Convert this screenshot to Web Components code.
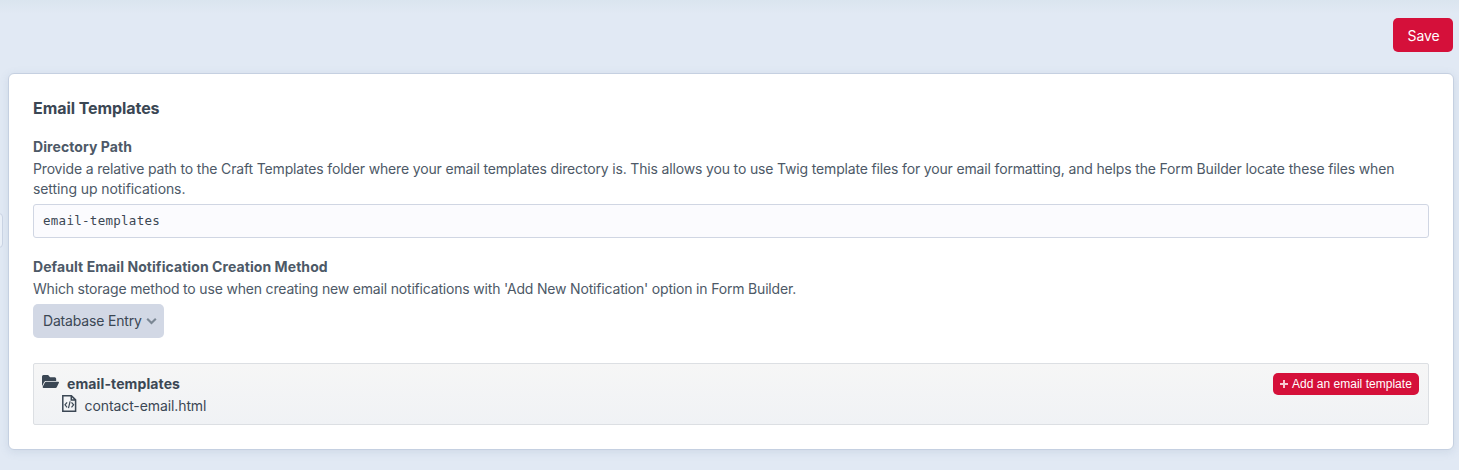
<!DOCTYPE html>
<html lang="en">
<head>
<meta charset="utf-8">
<title>Email Templates</title>
<style>
html,body{margin:0;height:100%;overflow:hidden}
body{font-family:Inter,"Liberation Sans",sans-serif;font-size:14px;line-height:20px;color:#3b4754;background:#e1e9f4}
</style>
</head>
<body>
<settings-page></settings-page>
<script>
const define = (name, html) => customElements.define(name, class extends HTMLElement {
  constructor() {
    super();
    this.attachShadow({mode: 'open'}).innerHTML = html;
  }
});

define('action-button', `<style>
:host{display:flex;align-items:center;justify-content:center;box-sizing:border-box;background:#d5103a;color:#fff;border-radius:5px;width:60px;height:34px;white-space:nowrap;padding:2px 0 0 1px;letter-spacing:-.1px}
:host([small]){width:146px;height:22px;border-radius:5px;font:12px/18px "Liberation Sans",sans-serif;letter-spacing:.02px;justify-content:flex-start;padding:0 0 0 7px;gap:4px}
svg{display:none}
:host([small]) svg{display:block}
</style><svg width="8" height="8" viewBox="0 0 8 8"><path d="M4 0v8M0 4h8" stroke="#f6c9d1" stroke-width="2"/></svg><slot></slot>`);

define('setting-field', `<style>
:host{display:block}
h3{margin:0;font-size:14px;line-height:20px;font-weight:700;color:#4d5967;white-space:nowrap;letter-spacing:.075px}
.help{color:#4d5967;margin:2px 0 5px;line-height:20px;white-space:nowrap;letter-spacing:var(--help-spacing,0)}
</style><h3><slot name="label"></slot></h3><div class="help"><slot name="help"></slot></div><slot></slot>`);

define('path-input', `<style>
:host{display:flex;align-items:center;box-sizing:border-box;height:34px;border:1px solid #d0d6e3;border-radius:3px;background:#fbfbfe;padding:0 9px;font:12.5px/18px "DejaVu Sans Mono",monospace;letter-spacing:.28px;color:#3b4754}
</style><slot></slot>`);

define('select-menu', `<style>
:host{display:flex;align-items:center;box-sizing:border-box;width:131px;height:34px;border-radius:5px;background:#d2d8e5;padding:0 7px 0 10px;justify-content:space-between;white-space:nowrap;letter-spacing:-.17px}
</style><slot></slot><svg width="11" height="8" viewBox="0 0 11 8"><path d="M1.2 1.7l4.3 4.3 4.3-4.3" fill="none" stroke="#7b8794" stroke-width="2.1"/></svg>`);

define('template-tree', `<style>
:host{display:flex;justify-content:space-between;box-sizing:border-box;height:62px;border:1px solid #dcdfe3;border-radius:2px;background:linear-gradient(#f6f6f6,#f0f2f5);padding:9px 9px 0 8px}
.row{display:flex;height:22px;align-items:center;white-space:nowrap}
.folder{font-weight:700;letter-spacing:.11px}
.file{margin-left:20px;letter-spacing:-.1px}
.folder svg{margin:-4px 8px 0 0}
.file svg{margin:-5px 7.6px 0 0}
</style><div>
<div class="row folder"><svg width="17" height="14" viewBox="0 0 576 448" preserveAspectRatio="none"><path fill="#3b4754" d="M573 229l-73 124c-8 14-25 23-41 23H45c-18 0-30-20-21-36l73-124c8-14 25-23 41-23h414c18 0 30 20 21 36zM144 172h336v-59c0-27-22-48-48-48H272L208 1H48C22 1 0 22 0 49v278l69-118c16-28 43-37 75-37z" transform="scale(1 1.1)"/></svg><slot name="folder"></slot></div>
<div class="row file"><svg width="15" height="17" viewBox="0 0 15 17" fill="none" stroke="#3b4754"><path d="M.8 .8h8.6l4.2 4.1v11.3H.8zM9.3.8V5h4.3" stroke-width="1.5"/><path d="M5.1 7.3L3 9.8l2.1 2.5M9.5 7.3l2.1 2.5-2.1 2.5M8.1 6.4l-1.6 6.8" stroke-width="1.2"/></svg><slot name="file"></slot></div>
</div><slot></slot>`);

define('content-pane', `<style>
:host{display:block;box-sizing:border-box;margin:21px 5px 0 8px;height:377px;background:#fff;border:1px solid #c5d0e1;border-radius:6px;box-shadow:0 2px 10px rgba(75,105,150,.13);padding:24px 24px 0}
h2{margin:0 0 19px;font-size:16px;line-height:20px;font-weight:700;color:#3b4754;letter-spacing:-.07px}
</style><h2><slot name="title"></slot></h2><slot></slot>`);

define('settings-page', `<style>
:host{display:block;position:relative;height:470px;overflow:hidden;background:linear-gradient(#dae5ef,#e1e9f4 14px)}
header{display:flex;justify-content:flex-end;padding:18px 6px 0 0}
.handle{position:absolute;left:-6px;top:213px;width:7px;height:33px;border:1px solid #c9d3e3;border-radius:4px;background:#eaf0f8}
#path{--help-spacing:-.159px}
#method{margin-top:19px;--help-spacing:-.181px}
.tail{letter-spacing:-.09px}
template-tree{margin-top:25px}
</style>
<header><action-button>Save</action-button></header>
<div class="handle"></div>
<content-pane><span slot="title">Email Templates</span>
<setting-field id="path"><span slot="label">Directory Path</span><span slot="help">Provide a relative path to the Craft Templates folder where your email templates directory is. This allows you to use Twig template files for your email formatting, and helps the Form Builder locate these files when<br><span class="tail">setting up notifications.</span></span><path-input>email-templates</path-input></setting-field>
<setting-field id="method"><span slot="label">Default Email Notification Creation Method</span><span slot="help">Which storage method to use when creating new email notifications with 'Add New Notification' option in Form Builder.</span><select-menu>Database Entry</select-menu></setting-field>
<template-tree><span slot="folder">email-templates</span><span slot="file">contact-email.html</span><action-button small>Add an email template</action-button></template-tree>
</content-pane>`);
</script>
</body>
</html>
